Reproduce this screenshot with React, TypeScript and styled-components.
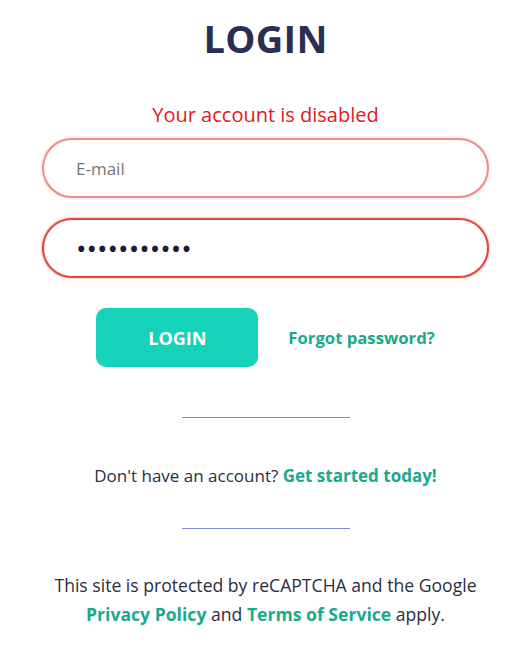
import styled, { createGlobalStyle } from "styled-components"

const GlobalStyle = createGlobalStyle`
    body {
        margin: 0;
        background: #ffffff;
        font-family: "Open Sans", "Liberation Sans", sans-serif;
    }
`

const Page = styled.main`
    width: 531px;
    height: 645px;
    box-sizing: border-box;
    padding: 12px 42px 0 42px;
    display: flex;
    flex-direction: column;
    align-items: center;
`

const Title = styled.h1`
    margin: 0;
    font-size: 38px;
    font-weight: 700;
    color: #2b2d52;
    line-height: 52px;
    letter-spacing: 0.3px;
`

const ErrorText = styled.p`
    margin: 38px 0 0 0;
    color: #e0191b;
    font-size: 20px;
    line-height: 26px;
`

const Form = styled.form`
    width: 100%;
    display: flex;
    flex-direction: column;
    gap: 20px;
    margin-top: 10px;
`

const Field = styled.input<{ strong?: boolean }>`
    width: 100%;
    height: 60px;
    box-sizing: border-box;
    border-radius: 30px;
    border: 2px solid ${(p) => (p.strong ? "#e4463f" : "#ec8d8a")};
    box-shadow: 0 0 3px ${(p) => (p.strong ? "rgba(230, 60, 50, 0.55)" : "rgba(230, 100, 90, 0.35)")};
    padding: 0 32px;
    font-family: "Open Sans", "Liberation Sans", sans-serif;
    font-size: ${(p) => (p.strong ? "28px" : "17px")};
    color: #1c1b33;
    outline: none;
    letter-spacing: ${(p) => (p.strong ? "0" : "0")};

    ::placeholder {
        color: #8c92a0;
    }
`

const Actions = styled.div`
    display: flex;
    align-items: center;
    justify-content: center;
    gap: 30px;
    margin-top: 10px;
`

const LoginButton = styled.button`
    width: 162px;
    height: 59px;
    border: none;
    border-radius: 10px;
    background: #14d3b9;
    color: #ffffff;
    font-family: "Open Sans", "Liberation Sans", sans-serif;
    font-size: 18px;
    font-weight: 700;
`

const Link = styled.a`
    color: #1aa98c;
    font-weight: 700;
    text-decoration: none;
    cursor: pointer;
`

const ForgotLink = styled(Link)`
    font-size: 16.7px;
`

const Divider = styled.hr<{ top: number }>`
    width: 168px;
    margin: ${(p) => p.top}px 0 0 0;
    border: none;
    border-top: 1px solid #7d86d2;
`

const Prompt = styled.p`
    margin: 46px 0 0 0;
    font-size: 17px;
    line-height: 24px;
    color: #2b2d3f;
`

const Footer = styled.p`
    margin: 42px 0 0 0;
    font-size: 17.6px;
    line-height: 29px;
    color: #2b2d3f;
    text-align: center;
`

export default function App() {
    return (
        <Page>
            <GlobalStyle />
            <Title>LOGIN</Title>
            <ErrorText>Your account is disabled</ErrorText>
            <Form onSubmit={(e) => e.preventDefault()}>
                <Field type="email" placeholder="E-mail" />
                <Field type="password" strong defaultValue="secretpass1" />
                <Actions>
                    <LoginButton type="submit">LOGIN</LoginButton>
                    <ForgotLink>Forgot password?</ForgotLink>
                </Actions>
            </Form>
            <Divider top={50} />
            <Prompt>
                Don't have an account? <Link>Get started today!</Link>
            </Prompt>
            <Divider top={40} />
            <Footer>
                This site is protected by reCAPTCHA and the Google
                <br />
                <Link>Privacy Policy</Link> and <Link>Terms of Service</Link> apply.
            </Footer>
        </Page>
    )
}
